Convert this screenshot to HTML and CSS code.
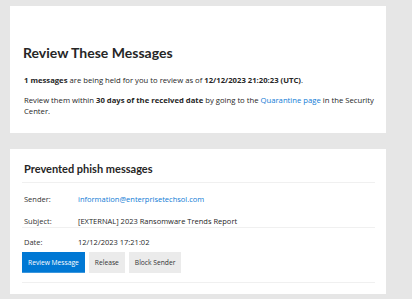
FILE: index.html
```html
<!DOCTYPE html>
<html lang="en">
<head>
    <meta charset="UTF-8">
    <title>Review These Messages</title>
    <link rel="stylesheet" href="styles.css">
</head>
<body>
<div class="page">
    <div class="card intro">
        <h1>Review These Messages</h1>
        <p><b>1 messages</b> are being held for you to review as of <b>12/12/2023 21:20:23 (UTC)</b>.</p>
        <p>Review them within <b>30 days of the received date</b> by going to the <a href="#">Quarantine page</a> in the Security Center.</p>
    </div>
    <div class="card list">
        <h2>Prevented phish messages</h2>
        <div class="msg">
            <div class="row">
                <span class="label">Sender:</span>
                <a href="#">information@enterprisetechsol.com</a>
            </div>
            <div class="row">
                <span class="label">Subject:</span>
                <span>[EXTERNAL] 2023 Ransomware Trends Report</span>
            </div>
            <div class="row date">
                <span class="label">Date:</span>
                <span>12/12/2023 17:21:02</span>
            </div>
            <div class="actions">
                <button class="btn btn-primary">Review Message</button>
                <button class="btn">Release</button>
                <button class="btn">Block Sender</button>
            </div>
        </div>
    </div>
</div>
</body>
</html>
```

FILE: styles.css
```css
* {
    margin: 0;
    padding: 0;
    box-sizing: border-box;
}

body {
    background: #e6e6e6;
    font-family: "Open Sans", "Liberation Sans", sans-serif;
    color: #262626;
}

.page {
    display: flex;
    flex-direction: column;
    gap: 16px;
    width: 376px;
    margin: 6px 0 0 10px;
}

.card {
    background: #fff;
}

a {
    color: #0f7bd5;
    text-decoration: none;
}

.intro {
    height: 127px;
    padding: 36px 8px 0 14px;
}

.intro h1 {
    font-family: Lato, "Open Sans", sans-serif;
    font-size: 14px;
    font-weight: 700;
    line-height: 22px;
    margin: 0 0 11px -1px;
}

.intro p {
    font-size: 7.7px;
    line-height: 11px;
    margin-bottom: 9px;
}

.list {
    height: 145px;
    padding: 12px 11px 0 12px;
}

.list h2 {
    font-family: Lato, "Open Sans", sans-serif;
    font-size: 11px;
    font-weight: 700;
    line-height: 16px;
    padding: 0 2px 5px;
    border-bottom: 1px solid #f0f0f0;
}

.msg {
    padding-bottom: 9px;
    border-bottom: 1px solid #f0f0f0;
}

.row {
    display: flex;
    font-size: 7.5px;
    line-height: 11px;
    padding: 11px 2px 0;
}

.row.date {
    border-top: 1px solid #f0f0f0;
    padding-top: 9px;
}

.label {
    width: 54px;
    color: #333;
}

.actions {
    display: flex;
    gap: 4px;
    margin-top: 4px;
}

.btn {
    height: 21px;
    padding: 0 6px;
    border: none;
    background: #ebebeb;
    color: #333;
    font-family: inherit;
    font-size: 6.7px;
}

.btn-primary {
    background: #0078d4;
    color: #fff;
    border-bottom: 1px solid #3a96dd;
}
```
